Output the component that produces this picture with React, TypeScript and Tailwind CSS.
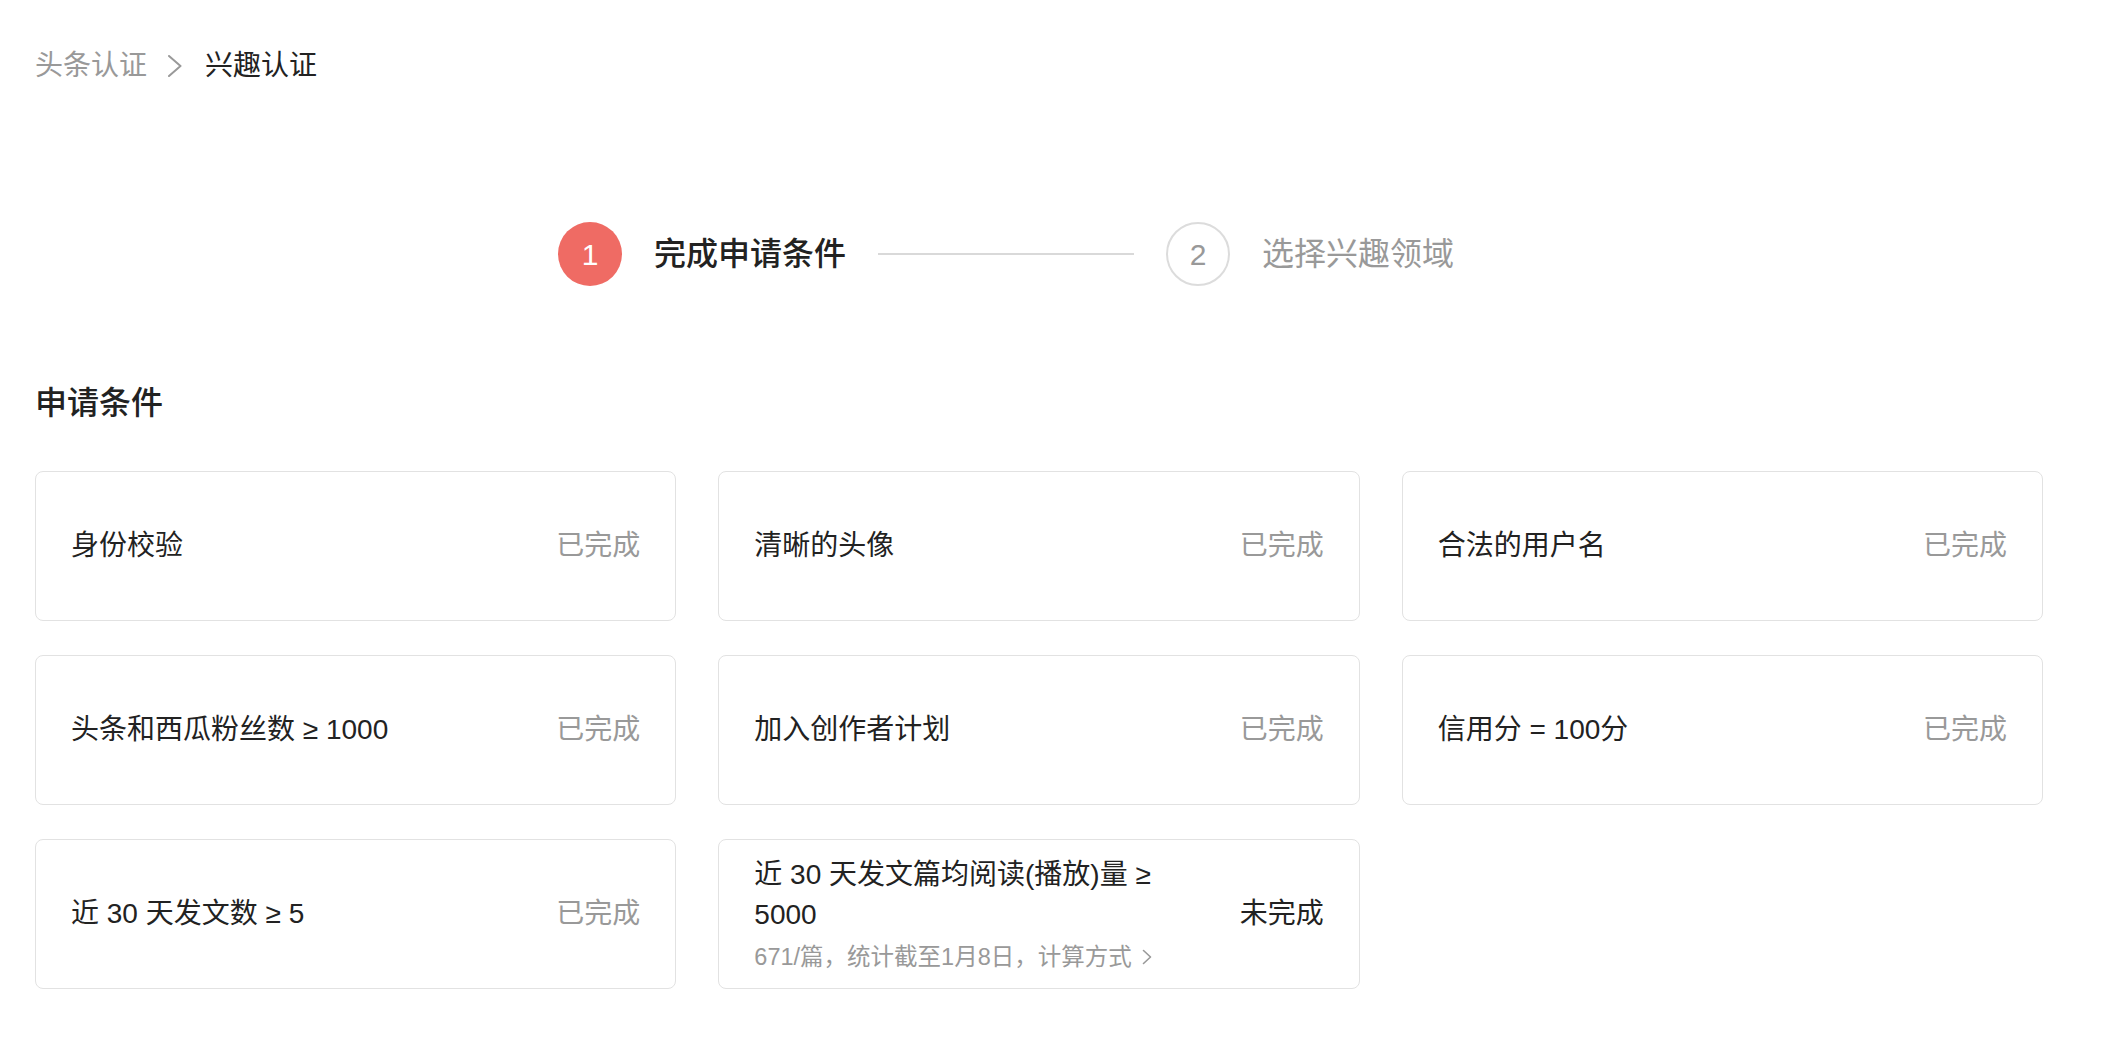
import type { ReactNode } from 'react'

const FONT = { fontFamily: '"Liberation Sans", "Noto Sans CJK SC", sans-serif' }

type Condition = {
  title: ReactNode
  done: boolean
  note?: string
}

const conditions: Condition[] = [
  { title: '身份校验', done: true },
  { title: '清晰的头像', done: true },
  { title: '合法的用户名', done: true },
  { title: '头条和西瓜粉丝数 ≥ 1000', done: true },
  { title: '加入创作者计划', done: true },
  { title: '信用分 = 100分', done: true },
  { title: '近 30 天发文数 ≥ 5', done: true },
  {
    title: (
      <>
        近 30 天发文篇均阅读(播放)量 ≥
        <br />
        5000
      </>
    ),
    done: false,
    note: '671/篇，统计截至1月8日，计算方式',
  },
]

function Chevron({ className }: { className?: string }) {
  return (
    <svg viewBox="0 0 14 22" className={className} fill="none" stroke="currentColor" strokeWidth="2">
      <polyline points="1,1 12.5,11 1,21" strokeLinecap="round" strokeLinejoin="round" />
    </svg>
  )
}

function SmallChevron() {
  return (
    <svg viewBox="0 0 10 16" className="w-[10px] h-[16px] ml-[10px] text-[#999]" fill="none" stroke="currentColor" strokeWidth="1.6">
      <polyline points="1.5,1.5 8.5,8 1.5,14.5" strokeLinecap="round" strokeLinejoin="round" />
    </svg>
  )
}

function Stepper() {
  return (
    <div className="flex items-center mt-[136px] pl-[523px]">
      <div className="w-[64px] h-[64px] rounded-full bg-[#ef6b64] flex items-center justify-center text-white text-[30px]">1</div>
      <span className="ml-[32px] text-[32px] leading-[44px] font-medium text-[#222]">完成申请条件</span>
      <div className="ml-[32px] w-[256px] h-[2px] bg-[#d9d9d9]" />
      <div className="ml-[32px] w-[64px] h-[64px] rounded-full border-2 border-[#dcdcdc] flex items-center justify-center text-[#999] text-[30px]">2</div>
      <span className="ml-[32px] text-[32px] leading-[44px] text-[#999]">选择兴趣领域</span>
    </div>
  )
}

function ConditionCard({ c }: { c: Condition }) {
  return (
    <div className="h-[150px] rounded-[8px] border-[1.5px] border-[#e2e2e2] bg-white px-[35px] flex items-center justify-between">
      <div className="flex flex-col whitespace-nowrap">
        <span className="text-[28px] leading-[40px] text-[#222]">{c.title}</span>
        {c.note && (
          <span className="mt-[6px] flex items-center text-[23.5px] leading-[32px] text-[#999]">
            {c.note}
            <SmallChevron />
          </span>
        )}
      </div>
      <span className={c.done ? 'text-[28px] leading-[40px] text-[#999]' : 'text-[28px] leading-[40px] text-[#222]'}>
        {c.done ? '已完成' : '未完成'}
      </span>
    </div>
  )
}

export default function App() {
  return (
    <div className="min-h-screen w-full bg-white" style={FONT}>
      <div className="pl-[35px] pr-[65px]">
        {/* Breadcrumb */}
        <div className="pt-[46px] flex items-center text-[28px] leading-[40px]">
          <span className="text-[#999]">头条认证</span>
          <Chevron className="ml-[21px] mr-[23px] w-[14px] h-[22px] text-[#999]" />
          <span className="text-[#222]">兴趣认证</span>
        </div>

        <Stepper />

        <h2 className="mt-[95px] text-[32px] leading-[44px] font-medium text-[#222]">申请条件</h2>

        <div className="mt-[46px] w-[2008px] grid grid-cols-3 gap-x-[42px] gap-y-[34px]">
          {conditions.map((c, i) => (
            <ConditionCard key={i} c={c} />
          ))}
        </div>
      </div>
    </div>
  )
}
